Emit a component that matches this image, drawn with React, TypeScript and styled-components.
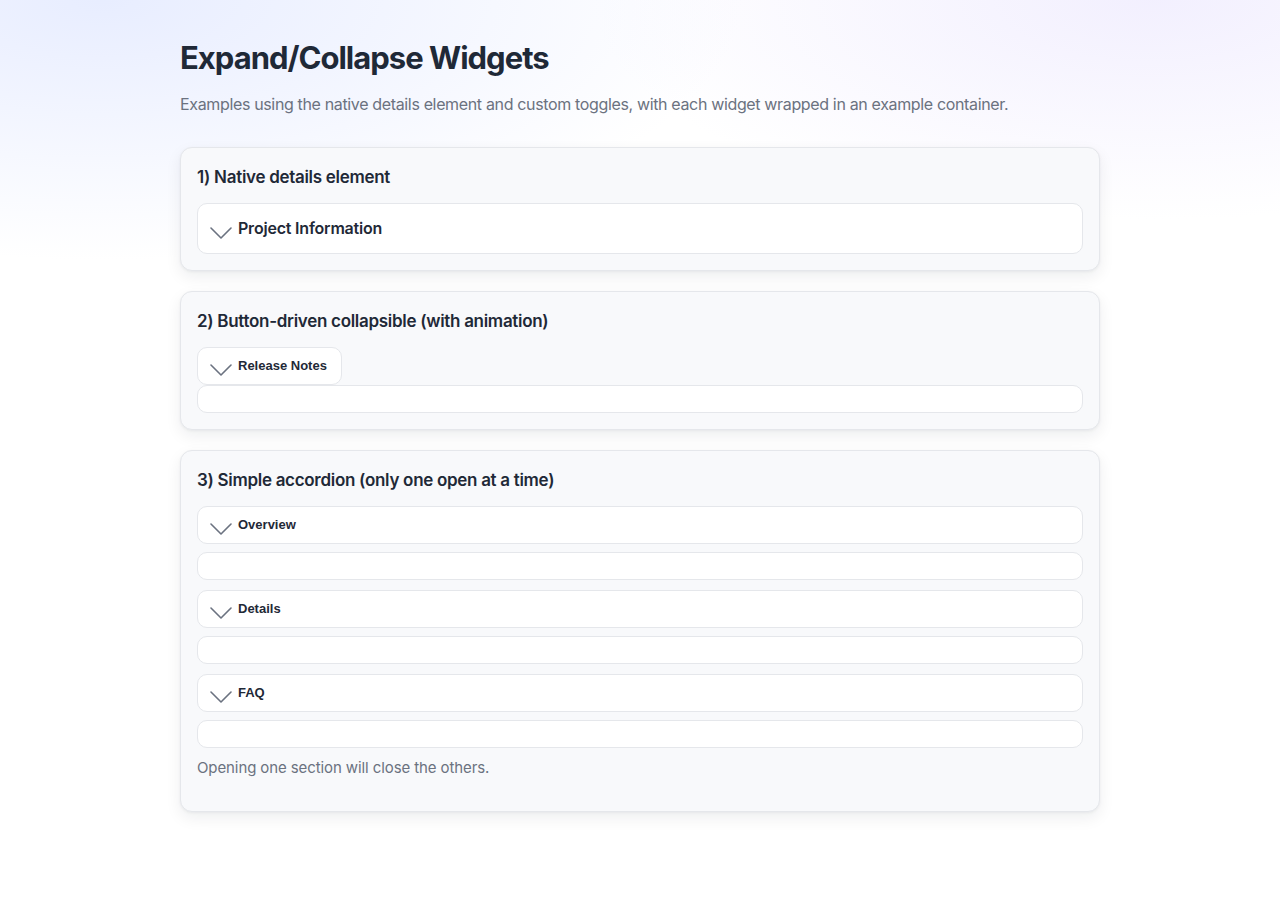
import React, { useState } from 'react';
import styled, { createGlobalStyle } from 'styled-components';

const GlobalStyle = createGlobalStyle`
  html, body {
    margin: 0;
    padding: 0;
  }
  body {
    min-height: 913px;
    font-family: Inter, "Noto Sans", "Liberation Sans", sans-serif;
    color: #1f2937;
    background:
      radial-gradient(640px 260px at 8% 0%, rgba(224, 231, 255, 0.75), rgba(224, 231, 255, 0) 100%),
      radial-gradient(560px 220px at 90% 0%, rgba(237, 233, 254, 0.7), rgba(237, 233, 254, 0) 100%),
      #ffffff;
    background-repeat: no-repeat;
  }
`;

const Page = styled.main`
  max-width: 920px;
  margin: 0 auto;
  padding: 39px 0 60px;
`;

const Title = styled.h1`
  margin: 0;
  font-size: 31px;
  line-height: 38px;
  font-weight: 700;
  letter-spacing: -1px;
  color: #1f2937;
`;

const Lead = styled.p`
  margin: 15px 0 31px;
  font-size: 16px;
  line-height: 24px;
  letter-spacing: -0.35px;
  color: #6b7280;
`;

const Stack = styled.div`
  display: flex;
  flex-direction: column;
  gap: 20px;
`;

const Example = styled.section`
  background: #f8f9fb;
  border: 1px solid #e5e7eb;
  border-radius: 12px;
  padding: 16px;
  box-shadow: 0 6px 16px rgba(15, 23, 42, 0.07), 0 1px 3px rgba(15, 23, 42, 0.05);
`;

const ExampleTitle = styled.h2`
  margin: 0 0 13px;
  font-size: 17px;
  line-height: 26px;
  font-weight: 600;
  letter-spacing: -0.3px;
  color: #1f2937;
`;

const Details = styled.details`
  background: #fff;
  border: 1px solid #e5e7eb;
  border-radius: 10px;
`;

const Summary = styled.summary`
  display: flex;
  align-items: center;
  gap: 6px;
  padding: 12px;
  font-size: 16px;
  line-height: 25px;
  font-weight: 600;
  letter-spacing: -0.2px;
  color: #1f2937;
  cursor: pointer;
  list-style: none;
  &::-webkit-details-marker {
    display: none;
  }
`;

const Toggle = styled.button<{ $full?: boolean }>`
  display: ${(p) => (p.$full ? 'flex' : 'inline-flex')};
  width: ${(p) => (p.$full ? '100%' : 'auto')};
  align-items: center;
  gap: 6px;
  padding: 10px 14px 10px 12px;
  background: #fff;
  border: 1px solid #e5e7eb;
  border-radius: 10px;
  font-family: "Liberation Sans", Arial, sans-serif;
  font-size: 13px;
  line-height: 16px;
  font-weight: 700;
  color: #1f2937;
  text-align: left;
  cursor: pointer;
`;

const Chevron = styled.svg<{ $open: boolean }>`
  flex: none;
  width: 22px;
  height: 12px;
  margin: 4px 0 -4px;
  transform: rotate(${(p) => (p.$open ? '180deg' : '0deg')});
  transition: transform 0.2s ease;
`;

const Panel = styled.div<{ $open: boolean }>`
  background: #fff;
  border: 1px solid #e5e7eb;
  border-radius: 10px;
  padding: 0 12px;
  min-height: 26px;
  max-height: ${(p) => (p.$open ? '200px' : '26px')};
  overflow: hidden;
  font-size: 15px;
  line-height: 22px;
  color: #4b5563;
  transition: max-height 0.25s ease;
`;

const PanelText = styled.p`
  margin: 2px 0 10px;
`;

const Item = styled.div`
  display: flex;
  flex-direction: column;
  gap: 8px;
  margin-bottom: 10px;
`;

const Note = styled.p`
  margin: 0 0 17px;
  font-size: 15px;
  line-height: 20px;
  letter-spacing: -0.1px;
  color: #6b7280;
`;

const DetailsBody = styled.div`
  padding: 0 12px 12px 40px;
  font-size: 15px;
  line-height: 22px;
  color: #4b5563;
`;

const ChevronIcon = ({ open = false }: { open?: boolean }) => (
  <Chevron $open={open} viewBox="0 0 22 12" fill="none">
    <polyline points="1,1 11,11 21,1" stroke="#6b7280" strokeWidth="1.6" strokeLinecap="round" strokeLinejoin="round" />
  </Chevron>
);

const sections = [
  { id: 'overview', label: 'Overview', body: 'A quick summary of what this widget collection does.' },
  { id: 'details', label: 'Details', body: 'Each toggle keeps track of its own open state.' },
  { id: 'faq', label: 'FAQ', body: 'Only one accordion section can be open at once.' },
];

export default function App() {
  const [notesOpen, setNotesOpen] = useState(false);
  const [active, setActive] = useState<string | null>(null);

  return (
    <>
      <GlobalStyle />
      <Page>
        <Title>Expand/Collapse Widgets</Title>
        <Lead>Examples using the native details element and custom toggles, with each widget wrapped in an example container.</Lead>

        <Stack>
          <Example>
            <ExampleTitle>1) Native details element</ExampleTitle>
            <Details>
              <Summary>
                <ChevronIcon />
                Project Information
              </Summary>
              <DetailsBody>Started in 2024, maintained by the UI team.</DetailsBody>
            </Details>
          </Example>

          <Example>
            <ExampleTitle>2) Button-driven collapsible (with animation)</ExampleTitle>
            <div>
              <Toggle aria-expanded={notesOpen} onClick={() => setNotesOpen(!notesOpen)}>
                <ChevronIcon open={notesOpen} />
                Release Notes
              </Toggle>
            </div>
            <Panel $open={notesOpen}>
              {notesOpen && <PanelText>v1.2 adds keyboard support and smoother transitions.</PanelText>}
            </Panel>
          </Example>

          <Example>
            <ExampleTitle>3) Simple accordion (only one open at a time)</ExampleTitle>
            {sections.map((s) => {
              const open = active === s.id;
              return (
                <Item key={s.id}>
                  <Toggle $full aria-expanded={open} onClick={() => setActive(open ? null : s.id)}>
                    <ChevronIcon open={open} />
                    {s.label}
                  </Toggle>
                  <Panel $open={open}>{open && <PanelText>{s.body}</PanelText>}</Panel>
                </Item>
              );
            })}
            <Note>Opening one section will close the others.</Note>
          </Example>
        </Stack>
      </Page>
    </>
  );
}
